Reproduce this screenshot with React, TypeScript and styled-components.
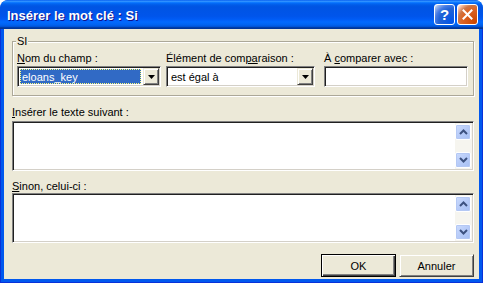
import React from 'react';
import styled, { createGlobalStyle, css } from 'styled-components';

const Global = createGlobalStyle`
  html, body { margin: 0; padding: 0; background: #ffffff; }
  body {
    width: 483px; height: 283px; overflow: hidden;
    font-family: "Liberation Sans", Arial, sans-serif;
    font-size: 11px; color: #000;
  }
`;

const Window = styled.div`
  width: 483px;
  height: 283px;
  display: flex;
  flex-direction: column;
  border-radius: 8px 8px 0 0;
  overflow: hidden;
  background: #0055e5;
`;

const TitleBar = styled.div`
  height: 29px;
  flex: none;
  display: flex;
  align-items: center;
  padding: 0 5px 0 7px;
  box-sizing: border-box;
  background: linear-gradient(
    to bottom,
    #0058ee 0%, #3593ff 4%, #288eff 6%, #127dff 8%, #036ffc 10%,
    #0262ee 14%, #0057e5 20%, #0054e3 24%, #0055eb 56%, #005bf5 66%,
    #026afe 76%, #0062ef 86%, #0052d6 92%, #0040ab 94%, #003092 100%
  );
  border-radius: 8px 8px 0 0;
`;

const Title = styled.div`
  flex: 1;
  color: #fff;
  font-family: "Liberation Sans", Arial, sans-serif;
  font-weight: bold;
  font-size: 13px;
  text-shadow: 1px 1px 0 #0f1089;
  white-space: nowrap;
  padding-top: 1px;
`;

const CaptionButtons = styled.div`
  display: flex;
  gap: 2px;
  align-items: center;
`;

const CaptionButton = styled.div<{ $kind: 'help' | 'close' }>`
  width: 21px;
  height: 21px;
  box-sizing: border-box;
  border: 1px solid #fff;
  border-radius: 3px;
  display: flex;
  align-items: center;
  justify-content: center;
  ${(p) =>
    p.$kind === 'help'
      ? css`
          background: radial-gradient(circle at 90% 90%, #0054e9 0%, #2263d5 55%, #4479e4 70%, #a3bbec 90%, #fff 100%);
        `
      : css`
          background: radial-gradient(circle at 90% 90%, #cc4600 0%, #dc6527 55%, #cd7546 70%, #ffccb2 90%, #fff 100%);
        `}
`;

const HelpMark = styled.span`
  color: #fff;
  font-family: "Liberation Sans", Arial, sans-serif;
  font-weight: bold;
  font-size: 15px;
  line-height: 1;
`;

const Frame = styled.div`
  flex: 1;
  display: flex;
  padding: 0 3px 3px;
  border: 1px solid #0831d9;
  border-top: none;
  background: #0058ee;
`;

const Client = styled.div`
  flex: 1;
  background: #ece9d8;
  display: flex;
  flex-direction: column;
  padding: 6px 5px 0 8px;
`;

const Group = styled.fieldset`
  margin: 0;
  padding: 4px 4px 8px 3px;
  border: 1px solid #aca899;
  box-shadow: 1px 1px 0 #fff, inset 1px 1px 0 #fff;
  border-radius: 0;
  display: flex;
  gap: 5px;
  min-width: 0;
`;

const Legend = styled.legend`
  padding: 0 1px;
  line-height: 13px;
  background: #ece9d8;
`;

const Column = styled.div<{ $w: number; $gap?: number }>`
  width: ${(p) => p.$w}px;
  margin-left: ${(p) => p.$gap ?? 0}px;
  display: flex;
  flex-direction: column;
  gap: 1px;
`;

const Label = styled.div<{ $top?: number; $bottom?: number }>`
  line-height: 13px;
  white-space: nowrap;
  margin-top: ${(p) => p.$top ?? 0}px;
  margin-bottom: ${(p) => p.$bottom ?? 0}px;
`;

const Key = styled.span`
  text-decoration: underline;
`;

const sunken = css`
  box-sizing: border-box;
  border: 1px solid;
  border-color: #808080 #fff #fff #808080;
  box-shadow: inset 1px 1px 0 #202020, inset -1px -1px 0 #d4d0c8;
  background: #fff;
  padding: 1px;
`;

const Combo = styled.div`
  ${sunken};
  height: 21px;
  display: flex;
`;

const ComboValue = styled.div<{ $selected?: boolean }>`
  flex: 1;
  display: flex;
  align-items: center;
  padding-left: 2px;
  margin: 1px 2px 1px 1px;
  white-space: nowrap;
  ${(p) =>
    p.$selected &&
    css`
      background: #316ac5;
      color: #fff;
      outline: 1px dotted #ffff80;
      outline-offset: -1px;
    `}
`;

const raised = css`
  box-sizing: border-box;
  border: 1px solid;
  border-color: #ece9d8 #404040 #404040 #ece9d8;
  box-shadow: inset 1px 1px 0 #fff, inset -1px -1px 0 #808080;
  background: #ece9d8;
`;

const DropButton = styled.div`
  ${raised};
  width: 16px;
  height: 17px;
  display: flex;
  align-items: center;
  justify-content: center;
`;

const TextInput = styled.input`
  ${sunken};
  height: 21px;
  width: 100%;
  outline: none;
  font: inherit;
  padding: 1px 3px;
`;

const TextBox = styled.div`
  ${sunken};
  height: 50px;
  display: flex;
`;

const TextArea = styled.textarea`
  flex: 1;
  border: none;
  outline: none;
  resize: none;
  font: inherit;
  background: transparent;
  padding: 1px 3px;
  margin: 0;
`;

const ScrollBar = styled.div`
  width: 17px;
  display: flex;
  flex-direction: column;
  justify-content: space-between;
  background: #f6f5ef;
  padding: 1px 1px 1px 0;
  box-sizing: border-box;
`;

const ScrollArrow = styled.div`
  width: 16px;
  height: 16px;
  box-sizing: border-box;
  border: 1px solid #fff;
  border-radius: 2px;
  background: linear-gradient(135deg, #cddcfd 0%, #b9cdf9 45%, #a6bff3 100%);
  box-shadow: 0 0 0 1px #b4c8f4 inset;
  display: flex;
  align-items: center;
  justify-content: center;
`;

const Footer = styled.div`
  display: flex;
  justify-content: flex-end;
  gap: 3px;
  margin-top: 11px;
`;

const PushButton = styled.button<{ $default?: boolean }>`
  width: 75px;
  height: 23px;
  font: inherit;
  color: #000;
  padding: 0;
  ${raised};
  ${(p) =>
    p.$default &&
    css`
      border: 1px solid #000;
      box-shadow: inset 1px 1px 0 #fff, inset -1px -1px 0 #404040, inset -2px -2px 0 #808080;
    `}
`;

const Triangle = () => (
  <svg width="7" height="4" viewBox="0 0 7 4">
    <polygon points="0,0 7,0 3.5,4" fill="#000" />
  </svg>
);

const Chevron = ({ up }: { up?: boolean }) => (
  <svg width="9" height="6" viewBox="0 0 9 6">
    <polyline
      points={up ? '1,5 4.5,1.5 8,5' : '1,1 4.5,4.5 8,1'}
      fill="none"
      stroke="#3d5280"
      strokeWidth="2"
    />
  </svg>
);

const CloseX = () => (
  <svg width="11" height="11" viewBox="0 0 11 11">
    <path d="M1.5 1.5 L9.5 9.5 M9.5 1.5 L1.5 9.5" stroke="#fff" strokeWidth="2" strokeLinecap="square" />
  </svg>
);

const MultiLine = () => (
  <TextBox>
    <TextArea />
    <ScrollBar>
      <ScrollArrow>
        <Chevron up />
      </ScrollArrow>
      <ScrollArrow>
        <Chevron />
      </ScrollArrow>
    </ScrollBar>
  </TextBox>
);

export default function App() {
  return (
    <>
      <Global />
      <Window>
        <TitleBar>
          <Title>Insérer le mot clé : Si</Title>
          <CaptionButtons>
            <CaptionButton $kind="help">
              <HelpMark>?</HelpMark>
            </CaptionButton>
            <CaptionButton $kind="close">
              <CloseX />
            </CaptionButton>
          </CaptionButtons>
        </TitleBar>
        <Frame>
          <Client>
            <Group>
              <Legend>SI</Legend>
              <Column $w={144} $gap={1}>
                <Label>
                  <Key>N</Key>om du champ :
                </Label>
                <Combo>
                  <ComboValue $selected>eloans_key</ComboValue>
                  <DropButton>
                    <Triangle />
                  </DropButton>
                </Combo>
              </Column>
              <Column $w={149}>
                <Label>
                  Élément de com<Key>pa</Key>raison :
                </Label>
                <Combo>
                  <ComboValue>est égal à</ComboValue>
                  <DropButton>
                    <Triangle />
                  </DropButton>
                </Combo>
              </Column>
              <Column $w={144} $gap={4}>
                <Label>
                  À <Key>c</Key>omparer avec :
                </Label>
                <TextInput defaultValue="" />
              </Column>
            </Group>
            <Label $top={10} $bottom={2}>
              <Key>I</Key>nsérer le texte suivant :
            </Label>
            <MultiLine />
            <Label $top={9} $bottom={0}>
              <Key>S</Key>inon, celui-ci :
            </Label>
            <MultiLine />
            <Footer>
              <PushButton $default>OK</PushButton>
              <PushButton>Annuler</PushButton>
            </Footer>
          </Client>
        </Frame>
      </Window>
    </>
  );
}
